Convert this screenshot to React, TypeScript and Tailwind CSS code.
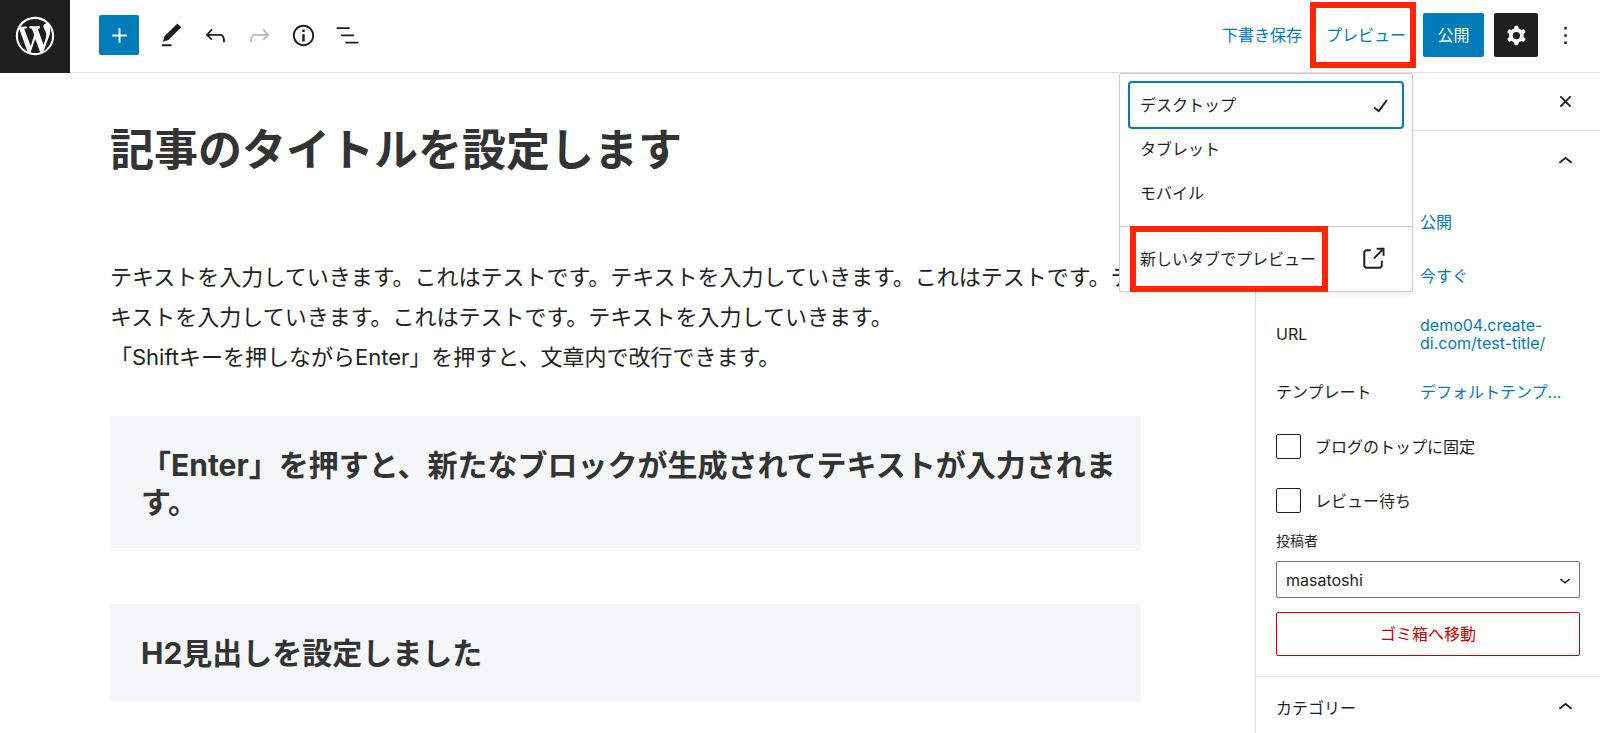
import type { ReactNode } from 'react';

const icons = {
  plus: 'M18 11.2h-5.2V6h-1.6v5.2H6v1.6h5.2V18h1.6v-5.2H18z',
  edit: 'M20.1 5.1L16.9 2 6.2 12.7l-1.3 4.4 4.5-1.3L20.1 5.1zM4 20.8h8v-1.5H4v1.5z',
  undo: 'M18.3 11.7c-.6-.6-1.4-.9-2.3-.9H6.7l2.9-3.3-1.1-1-4.5 5L8.5 16l1-1-2.7-2.7H16c.5 0 .9.2 1.3.5 1 1 1 3.4 1 4.5v.3h1.5v-.2c0-1.5 0-4.3-1.5-5.7z',
  redo: 'M15.6 6.5l-1.1 1 2.9 3.3H8c-.9 0-1.7.3-2.3.9-1.4 1.5-1.4 4.2-1.4 5.6v.2h1.5v-.3c0-1.1 0-3.5 1-4.5.3-.3.7-.5 1.3-.5h9.2L14.5 15l1.1 1.1 4.6-4.6-4.6-5z',
  info: 'M12 3.2c-4.8 0-8.8 3.9-8.8 8.8 0 4.8 3.9 8.8 8.8 8.8 4.8 0 8.8-3.9 8.8-8.8 0-4.8-4-8.8-8.8-8.8zm0 16c-4 0-7.2-3.3-7.2-7.2C4.8 8 8 4.8 12 4.8s7.2 3.3 7.2 7.2c0 4-3.2 7.2-7.2 7.2zM11 17h2v-6h-2v6zm0-8h2V7h-2v2z',
  listView: 'M13.8 5.2H3v1.5h10.8V5.2zm-3.6 12v1.5H21v-1.5H10.2zm7.2-6H6.6v1.5h10.8v-1.5z',
  cog: 'M10.289 4.836A1 1 0 0111.275 4h1.306a1 1 0 01.987.836l.244 1.466c.787.26 1.503.679 2.108 1.218l1.393-.522a1 1 0 011.216.437l.653 1.13a1 1 0 01-.23 1.273l-1.148.944a6.025 6.025 0 010 2.435l1.149.946a1 1 0 01.23 1.272l-.653 1.13a1 1 0 01-1.216.437l-1.394-.522c-.605.54-1.32.958-2.108 1.218l-.244 1.466a1 1 0 01-.987.836h-1.306a1 1 0 01-.986-.836l-.244-1.466a5.995 5.995 0 01-2.108-1.218l-1.394.522a1 1 0 01-1.217-.436l-.653-1.131a1 1 0 01.23-1.272l1.149-.946a6.026 6.026 0 010-2.435l-1.148-.944a1 1 0 01-.23-1.272l.653-1.131a1 1 0 011.217-.437l1.393.522a5.994 5.994 0 012.108-1.218l.244-1.466zM14.929 12a3 3 0 11-6 0 3 3 0 016 0z',
  more: 'M13 19h-2v-2h2v2zm0-6h-2v-2h2v2zm0-6h-2V5h2v2z',
  check: 'M16.7 7.1l-6.3 8.5-3.3-2.5-.9 1.2 4.5 3.4L17.9 8z',
  external:
    'M18.2 17c0 .7-.6 1.2-1.2 1.2H7c-.7 0-1.2-.6-1.2-1.2V7c0-.7.6-1.2 1.2-1.2h3.2V4.2H7C5.5 4.2 4.2 5.5 4.2 7v10c0 1.5 1.2 2.8 2.8 2.8h10c1.5 0 2.8-1.2 2.8-2.8v-3.6h-1.5V17zM14.9 3v1.5h3.7l-6.4 6.4 1.1 1.1 6.4-6.4v3.7h1.5V3h-6.3z',
  close:
    'M12 13.06l3.712 3.713 1.061-1.06L13.061 12l3.712-3.712-1.06-1.06L12 10.938 8.288 7.227l-1.061 1.06L10.939 12l-3.712 3.712 1.06 1.061L12 13.061z',
  chevronUp: 'M6.5 12.4L12 8l5.5 4.4-.9 1.2L12 10l-4.5 3.6-1-1.2z',
  chevronDown: 'M17.5 11.6L12 16l-5.5-4.4.9-1.2L12 14l4.5-3.6 1 1.2z',
};

interface IconProps {
  name: keyof typeof icons;
  className?: string;
}

function Icon({ name, className = 'size-[29px]' }: IconProps) {
  return (
    <svg viewBox="0 0 24 24" fill="currentColor" fillRule="evenodd" className={`shrink-0 ${className}`} aria-hidden="true">
      <path d={icons[name]} />
    </svg>
  );
}

function WordPressLogo() {
  return (
    <svg viewBox="-2 -2 24 24" fill="currentColor" className="size-[46px]" aria-hidden="true">
      <path d="M20 10c0-5.51-4.49-10-10-10C4.48 0 0 4.49 0 10c0 5.52 4.48 10 10 10 5.51 0 10-4.48 10-10zM7.78 15.37L4.37 6.22c.55-.02 1.17-.08 1.17-.08.5-.06.44-1.13-.06-1.11 0 0-1.45.11-2.37.11-.18 0-.37 0-.58-.01C4.12 2.69 6.87 1.11 10 1.11c2.33 0 4.45.87 6.05 2.34-.68-.11-1.65.39-1.65 1.58 0 .74.45 1.36.9 2.1.35.61.55 1.36.55 2.46 0 1.49-1.4 5-1.4 5l-3.03-8.37c.54-.02.82-.17.82-.17.5-.05.44-1.25-.06-1.22 0 0-1.44.12-2.38.12-.87 0-2.33-.12-2.33-.12-.5-.03-.56 1.2-.06 1.22l.92.08 1.26 3.41zM17.41 10c.24-.64.74-1.87.43-4.25.7 1.29 1.05 2.71 1.05 4.25 0 3.29-1.73 6.24-4.4 7.78.97-2.59 1.94-5.2 2.92-7.78zM6.1 18.09C3.12 16.65 1.11 13.53 1.11 10c0-1.3.23-2.48.72-3.59C3.25 10.3 4.67 14.2 6.1 18.09zm4.03-6.63l2.58 6.98c-.86.29-1.76.45-2.71.45-.79 0-1.57-.11-2.29-.33.81-2.38 1.62-4.74 2.42-7.1z" />
    </svg>
  );
}

const tools: { name: keyof typeof icons; label: string; disabled?: boolean }[] = [
  { name: 'edit', label: 'ツール' },
  { name: 'undo', label: '元に戻す' },
  { name: 'redo', label: 'やり直す', disabled: true },
  { name: 'info', label: '詳細' },
  { name: 'listView', label: 'リスト表示' },
];

const devices = ['デスクトップ', 'タブレット', 'モバイル'];

function PreviewMenu() {
  return (
    <div
      role="menu"
      className="absolute top-full right-0 z-20 mt-4 w-[294px] rounded-xs border border-[#ccc] bg-white text-[#1e1e1e] shadow-md shadow-black/5"
    >
      <div className="px-[10px] pt-[9px] pb-[11px]">
        {devices.map((device, i) => (
          <button
            key={device}
            type="button"
            role="menuitemradio"
            aria-checked={i === 0}
            className={`flex h-11 w-full items-center justify-between rounded-xs pr-[7px] pl-[10px] ${i === 0 ? 'ring-2 ring-[#007cba]' : ''}`}
          >
            {device}
            {i === 0 ? <Icon name="check" /> : null}
          </button>
        ))}
      </div>
      <div className="relative border-t border-[#ccc] p-[10px]">
        <a href="#preview" role="menuitem" className="flex h-11 items-center justify-between pr-[14px] pl-[10px]">
          新しいタブでプレビュー
          <Icon name="external" className="size-[30px]" />
        </a>
        <span className="pointer-events-none absolute -top-px left-[10px] h-[66px] w-[198px] border-6 border-[#ff2600]" />
      </div>
    </div>
  );
}

function Header() {
  return (
    <header className="flex h-[73px] shrink-0 items-center border-b border-[#e0e0e0] pr-[13px]">
      <a href="#dashboard" aria-label="投稿を表示" className="-mb-px flex h-[73px] w-[70px] items-center justify-center bg-[#1e1e1e] pb-0.5 text-white">
        <WordPressLogo />
      </a>
      <div className="mb-0.5 ml-[29px] flex items-center">
        <button type="button" aria-label="ブロック挿入" className="mr-[10px] flex size-10 items-center justify-center rounded-xs bg-[#007cba] text-white">
          <Icon name="plus" />
        </button>
        {tools.map((tool) => (
          <button
            key={tool.name}
            type="button"
            aria-label={tool.label}
            disabled={tool.disabled}
            className="flex size-11 items-center justify-center disabled:text-[#bbb]"
          >
            <Icon name={tool.name} />
          </button>
        ))}
      </div>

      <div className="mb-0.5 ml-auto flex items-center gap-[10px]">
        <button type="button" className="h-11 px-[7px] text-[#007cba]">
          下書き保存
        </button>
        <div className="relative">
          <button type="button" aria-haspopup="menu" aria-expanded="true" className="h-11 px-[7px] text-[#007cba]">
            プレビュー
          </button>
          <span className="pointer-events-none absolute -inset-x-[9px] -inset-y-[11px] mr-[6px] border-6 border-[#ff2600]" />
          <PreviewMenu />
        </div>
        <button type="button" className="h-11 w-[61px] rounded-xs bg-[#007cba] text-white">
          公開
        </button>
        <div className="flex gap-[5px]">
          <button type="button" aria-label="設定" className="flex size-11 items-center justify-center rounded-xs bg-[#1e1e1e] text-white">
            <Icon name="cog" />
          </button>
          <button type="button" aria-label="オプション" className="flex size-11 items-center justify-center">
            <Icon name="more" />
          </button>
        </div>
      </div>
    </header>
  );
}

function HeadingBlock({ children }: { children: ReactNode }) {
  return (
    <h2 className="rounded-xs bg-[#f4f6f8] pt-[31px] pr-6 pb-[30px] pl-[31px] text-3xl leading-[37px] font-bold text-[#333]">
      {children}
    </h2>
  );
}

function Editor() {
  return (
    <main className="min-w-0 flex-1 overflow-hidden pt-[47px] pr-[114px] pl-[110px]">
      <h1 className="text-[44px] leading-[60px] font-bold text-[#333]">記事のタイトルを設定します</h1>
      <p className="mt-[77px] -mr-1 text-[22px] leading-10 text-[#222]">
        テキストを入力していきます。これはテストです。テキストを入力していきます。これはテストです。テキストを入力していきます。これはテストです。テキストを入力していきます。
        <br />
        「Shiftキーを押しながらEnter」を押すと、文章内で改行できます。
      </p>
      <div className="mt-[39px] flex flex-col gap-[53px]">
        <HeadingBlock>「Enter」を押すと、新たなブロックが生成されてテキストが入力されます。</HeadingBlock>
        <HeadingBlock>H2見出しを設定しました</HeadingBlock>
      </div>
    </main>
  );
}

function PanelToggle({ title, label }: { title?: string; label?: string }) {
  return (
    <button type="button" aria-label={label} aria-expanded="true" className="flex h-[61px] w-full items-center justify-between px-5">
      <span>{title}</span>
      <Icon name="chevronUp" />
    </button>
  );
}

function SettingRow({ label, children }: { label?: string; children: ReactNode }) {
  return (
    <div className="flex min-h-11 items-center">
      <span className="w-36 shrink-0">{label}</span>
      {children}
    </div>
  );
}

function CheckRow({ id, label }: { id: string; label: string }) {
  return (
    <div className="flex items-center gap-[14px]">
      <input id={id} type="checkbox" className="size-[25px] appearance-none rounded-xs border border-[#1e1e1e] bg-white" />
      <label htmlFor={id} className="leading-6">
        {label}
      </label>
    </div>
  );
}

function Sidebar() {
  return (
    <aside className="w-[345px] shrink-0 overflow-hidden border-l border-[#e0e0e0]">
      <div className="flex h-[58px] items-center justify-end border-b border-[#e0e0e0] pr-5">
        <button type="button" aria-label="設定を閉じる">
          <Icon name="close" />
        </button>
      </div>

      <section className="border-b border-[#e0e0e0] pb-5">
        <PanelToggle label="ステータスと公開状態" />
        <div className="px-5 pt-2">
          <div className="flex flex-col gap-[10px]">
            <SettingRow>
              <button type="button" className="text-[#007cba]">
                公開
              </button>
            </SettingRow>
            <SettingRow>
              <button type="button" className="text-[#007cba]">
                今すぐ
              </button>
            </SettingRow>
            <SettingRow label="URL">
              <a href="#permalink" className="py-2 leading-[18px] text-[#007cba]">
                demo04.create-
                <br />
                di.com/test-title/
              </a>
            </SettingRow>
            <SettingRow label="テンプレート">
              <button type="button" className="min-w-0 text-left text-[#007cba]">
                デフォルトテンプ...
              </button>
            </SettingRow>
          </div>

          <div className="mt-5 flex flex-col gap-[29px]">
            <CheckRow id="sticky" label="ブログのトップに固定" />
            <CheckRow id="pending" label="レビュー待ち" />
          </div>

          <label htmlFor="author" className="mt-[18px] block text-sm leading-5">
            投稿者
          </label>
          <div className="relative mt-[10px]">
            <select id="author" className="h-[37px] w-full appearance-none rounded-xs border border-[#757575] bg-white px-[9px]">
              <option>masatoshi</option>
            </select>
            <Icon name="chevronDown" className="pointer-events-none absolute top-2 right-1 size-[22px]" />
          </div>
          <button type="button" className="mt-[14px] h-11 w-full rounded-xs border border-[#cc0000] text-[#cc0000]">
            ゴミ箱へ移動
          </button>
        </div>
      </section>

      <PanelToggle title="カテゴリー" />
    </aside>
  );
}

export default function App() {
  return (
    <div className="flex h-screen flex-col overflow-hidden bg-white font-['Inter','Noto_Sans_CJK_JP',sans-serif] text-base text-[#1e1e1e]">
      <Header />
      <div className="flex min-h-0 flex-1">
        <Editor />
        <Sidebar />
      </div>
    </div>
  );
}
